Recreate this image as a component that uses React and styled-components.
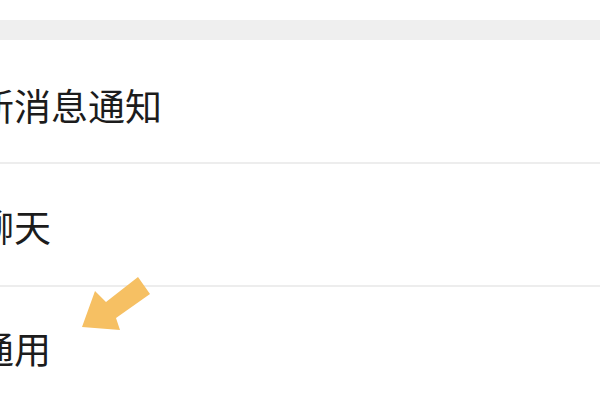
import React from "react";
import styled, { createGlobalStyle } from "styled-components";

const Global = createGlobalStyle`
  html, body { margin: 0; padding: 0; background: #ffffff; }
  body { font-family: "Noto Sans CJK SC", "Noto Sans", sans-serif; }
`;

const Page = styled.div`
  position: relative;
  width: 600px;
  height: 400px;
  overflow: hidden;
  background: #ffffff;
  display: flex;
  flex-direction: column;
`;

const TopSpace = styled.div`
  height: 20px;
  flex-shrink: 0;
  background: #ffffff;
`;

const Band = styled.div`
  height: 20px;
  flex-shrink: 0;
  background: #efefef;
`;

const List = styled.div`
  display: flex;
  flex-direction: column;
  flex-shrink: 0;
`;

const Row = styled.div`
  height: ${(p) => p.$h}px;
  flex-shrink: 0;
  display: flex;
  align-items: center;
  padding-top: ${(p) => p.$pt}px;
  box-sizing: border-box;
  border-bottom: ${(p) => (p.$last ? "none" : "2px solid #ededed")};
`;

const Label = styled.span`
  margin-left: -23px;
  font-size: 37px;
  line-height: 1;
  color: #1c1c1c;
  white-space: nowrap;
  font-family: "Noto Sans CJK SC", "Noto Sans", sans-serif;
`;

const Arrow = styled.svg`
  position: absolute;
  left: 0;
  top: 0;
  pointer-events: none;
`;

export default function App() {
  return (
    <>
      <Global />
      <Page>
        <TopSpace />
        <Band />
        <List>
          <Row $h={124} $pt={8}>
            <Label>新消息通知</Label>
          </Row>
          <Row $h={123} $pt={4}>
            <Label>聊天</Label>
          </Row>
          <Row $h={122} $pt={0} $last>
            <Label>通用</Label>
          </Row>
        </List>
        <Arrow width="600" height="400" viewBox="0 0 600 400">
          <polygon
            points="82,327 95,291 106,302 138,277 150,294 116,318 120,330"
            fill="#f6c063"
            strokeLinejoin="round"
          />
        </Arrow>
      </Page>
    </>
  );
}
